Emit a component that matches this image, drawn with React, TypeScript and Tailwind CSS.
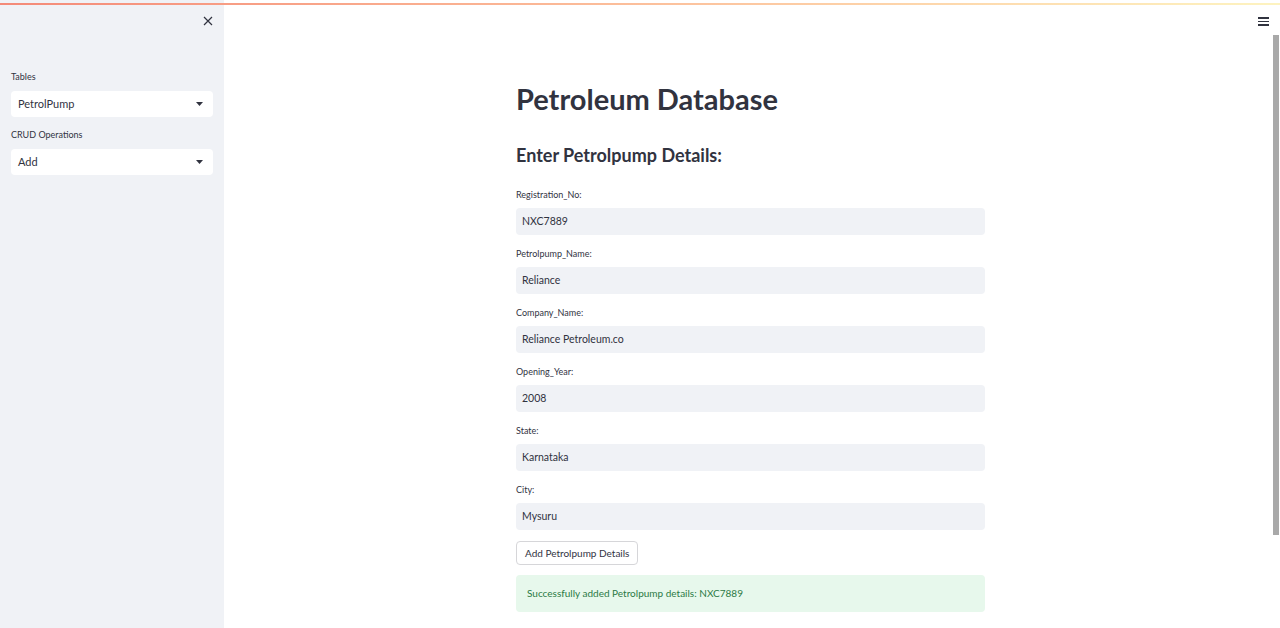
import React from 'react';

const fields = [
    { label: 'Registration_No:', value: 'NXC7889' },
    { label: 'Petrolpump_Name:', value: 'Reliance' },
    { label: 'Company_Name:', value: 'Reliance Petroleum.co' },
    { label: 'Opening_Year:', value: '2008' },
    { label: 'State:', value: 'Karnataka' },
    { label: 'City:', value: 'Mysuru' },
];

const Caret = () => (
    <svg width="7" height="4" viewBox="0 0 7 4">
        <path d="M0 0h7L3.5 4z" fill="#31333f" />
    </svg>
);

const SelectBox: React.FC<{ label: string; value: string }> = ({ label, value }) => (
    <div className="mb-[12px]">
        <div className="text-[9px] leading-[12px] text-[#31333f] mb-[8px]">{label}</div>
        <div className="h-[26px] bg-white rounded-[4px] flex items-center justify-between pl-[7px] pr-[10px]">
            <span className="text-[11px] text-[#31333f]">{value}</span>
            <Caret />
        </div>
    </div>
);

const App: React.FC = () => {
    return (
        <div
            className="relative flex h-[628px] w-[1280px] overflow-hidden bg-white text-[#31333f]"
            style={{ fontFamily: 'Lato, "Open Sans", sans-serif' }}
        >
            <div className="absolute left-0 right-0 top-[3px] h-[2px] bg-gradient-to-r from-[#f48a78] to-[#fdf3c0]" />

            <aside className="w-[224px] shrink-0 bg-[#f0f2f6] px-[11px]">
                <div className="flex justify-end pt-[16px]">
                    <svg width="10" height="10" viewBox="0 0 10 10">
                        <path d="M1 1l8 8M9 1l-8 8" stroke="#31333f" strokeWidth="1.2" />
                    </svg>
                </div>
                <div className="mt-[45px]">
                    <SelectBox label="Tables" value="PetrolPump" />
                    <SelectBox label="CRUD Operations" value="Add" />
                </div>
            </aside>

            <main className="relative flex-1">
                <div className="absolute right-[11px] top-[17px] flex flex-col gap-[2px]">
                    <div className="h-[1.5px] w-[11px] bg-[#31333f]" />
                    <div className="h-[1.5px] w-[11px] bg-[#31333f]" />
                    <div className="h-[1.5px] w-[11px] bg-[#31333f]" />
                </div>
                <div className="absolute right-[1px] top-[35px] h-[500px] w-[6px] bg-[#a9a9a9]" />

                <div className="ml-[292px] w-[469px] pt-[80px]">
                    <h1 className="text-[29px] font-bold leading-[37px]">Petroleum Database</h1>
                    <h2 className="mt-[25px] text-[18px] font-bold leading-[26px]">Enter Petrolpump Details:</h2>
                    <div className="mt-[20px]">
                        {fields.map((f) => (
                            <div key={f.label} className="mb-[12px]">
                                <div className="text-[9px] leading-[14px] mb-[6px]">{f.label}</div>
                                <div className="h-[27px] bg-[#f0f2f6] rounded-[4px] flex items-center px-[6px] text-[10.5px]">
                                    {f.value}
                                </div>
                            </div>
                        ))}
                    </div>
                    <button className="block -mt-[1px] h-[24px] px-[8px] bg-white border border-[#d6d6d9] rounded-[4px] text-[10px] text-[#31333f]">
                        Add Petrolpump Details
                    </button>
                    <div className="mt-[10px] h-[37px] rounded-[4px] bg-[#e7f8ec] flex items-center px-[11px] text-[10px] text-[#2b7a45]">
                        Successfully added Petrolpump details: NXC7889
                    </div>
                </div>
            </main>
        </div>
    );
};

export default App;
